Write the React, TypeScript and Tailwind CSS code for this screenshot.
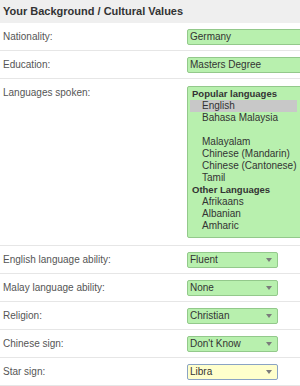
import React from "react";

const Arrow = () => (
  <span className="mr-[5px] block h-0 w-0 border-x-[3px] border-t-[4px] border-x-transparent border-t-[#7b7b7b]" />
);

function Row({ label, children }: { label: string; children: React.ReactNode }) {
  return (
    <div className="flex h-[28px] items-center border-b border-[#e6e6e6]">
      <div className="w-[187px] shrink-0 pl-[3px] text-[10px] text-[#555]">{label}</div>
      {children}
    </div>
  );
}

function Select({ value, yellow, wide }: { value: string; yellow?: boolean; wide?: boolean }) {
  const cls = yellow
    ? "border-[#8aa3c4] bg-[#ffffcc]"
    : "border-[#93c98b] bg-[#b8f0ae]";
  return (
    <div
      className={`flex h-[16px] shrink-0 items-center justify-between rounded-[2px] border pl-[2px] text-[10px] leading-none text-[#333] ${cls} ${wide ? "w-[140px]" : "w-[91px]"}`}
    >
      <span>{value}</span>
      {!wide && <Arrow />}
    </div>
  );
}

export default function App() {
  const items: { t: string; kind: "g" | "o" | "sel" | "blank" }[] = [
    { t: "Popular languages", kind: "g" },
    { t: "English", kind: "sel" },
    { t: "Bahasa Malaysia", kind: "o" },
    { t: "", kind: "blank" },
    { t: "Malayalam", kind: "o" },
    { t: "Chinese (Mandarin)", kind: "o" },
    { t: "Chinese (Cantonese)", kind: "o" },
    { t: "Tamil", kind: "o" },
    { t: "Other Languages", kind: "g" },
    { t: "Afrikaans", kind: "o" },
    { t: "Albanian", kind: "o" },
    { t: "Amharic", kind: "o" },
  ];
  return (
    <div className="h-[386px] w-[300px] overflow-hidden bg-white font-['Liberation_Sans',Arial,sans-serif]">
      <div className="flex h-[23px] items-center bg-[#efefef] pl-[3px] text-[11px] font-bold text-[#333]">
        Your Background / Cultural Values
      </div>
      <Row label="Nationality:">
        <Select value="Germany" wide />
      </Row>
      <Row label="Education:">
        <Select value="Masters Degree" wide />
      </Row>
      <div className="flex h-[167px] items-start border-b border-[#e6e6e6] pt-[7px]">
        <div className="w-[187px] shrink-0 pl-[3px] pt-[1px] text-[10px] leading-[12px] text-[#555]">
          Languages spoken:
        </div>
        <div className="h-[152px] w-[140px] shrink-0 rounded-[2px] border border-[#93c98b] bg-[#b8f0ae] py-[1px] text-[10px] leading-[12px] text-[#333]">
          {items.map((it, i) =>
            it.kind === "g" ? (
              <div key={i} className="h-[12px] pl-[4px] text-[9.5px] font-bold">
                {it.t}
              </div>
            ) : it.kind === "blank" ? (
              <div key={i} className="h-[12px]" />
            ) : (
              <div
                key={i}
                className={`ml-[2px] h-[12px] w-[107px] pl-[12px] ${it.kind === "sel" ? "bg-[#c8c8c8]" : ""}`}
              >
                {it.t}
              </div>
            )
          )}
        </div>
      </div>
      <Row label="English language ability:">
        <Select value="Fluent" />
      </Row>
      <Row label="Malay language ability:">
        <Select value="None" />
      </Row>
      <Row label="Religion:">
        <Select value="Christian" />
      </Row>
      <Row label="Chinese sign:">
        <Select value="Don't Know" />
      </Row>
      <Row label="Star sign:">
        <Select value="Libra" yellow />
      </Row>
    </div>
  );
}
